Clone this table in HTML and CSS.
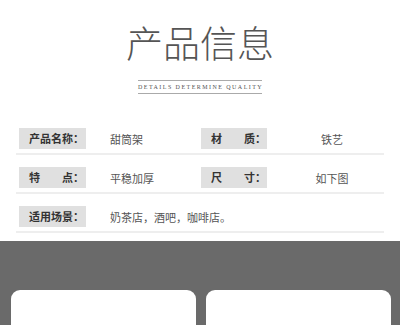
FILE: index.html
```html
<!DOCTYPE html>
<html lang="zh-CN">
<head>
<meta charset="utf-8">
<title>产品信息</title>
<link rel="stylesheet" href="styles.css">
</head>
<body>
<div class="page">
  <header class="head">
    <h1 class="title">产品信息</h1>
    <div class="sub">DETAILS DETERMINE QUALITY</div>
  </header>
  <section class="table">
    <div class="row">
      <div class="label">产品名称：</div>
      <div class="val">甜筒架</div>
      <div class="label label-r">材　　质：</div>
      <div class="val2">铁艺</div>
    </div>
    <div class="row">
      <div class="label">特　　点：</div>
      <div class="val">平稳加厚</div>
      <div class="label label-r">尺　　寸：</div>
      <div class="val2">如下图</div>
    </div>
    <div class="row">
      <div class="label">适用场景：</div>
      <div class="val val-wide">奶茶店，酒吧，咖啡店。</div>
    </div>
  </section>
  <section class="gallery">
    <div class="card"></div>
    <div class="card"></div>
  </section>
</div>
</body>
</html>
```
FILE: styles.css
```css
html, body {
  margin: 0;
  padding: 0;
  background: #fff;
}
body {
  font-family: "Noto Sans CJK SC", "Noto Sans", sans-serif;
  width: 400px;
  height: 325px;
  overflow: hidden;
}
.head {
  padding-top: 24px;
  display: flex;
  flex-direction: column;
  align-items: center;
}
.title {
  margin: 0;
  font-size: 37px;
  line-height: 37px;
  font-weight: 300;
  color: #555;
  letter-spacing: 0;
}
.sub {
  margin-top: 19px;
  width: 124px;
  height: 12px;
  border-top: 1px solid #aaa;
  border-bottom: 1px solid #aaa;
  font-family: "Liberation Serif", serif;
  font-size: 6px;
  line-height: 12px;
  letter-spacing: 1.45px;
  color: #555;
  text-align: center;
  white-space: nowrap;
}
.table {
  margin: 22px 16px 0;
}
.row {
  display: flex;
  align-items: center;
  padding: 12px 0 4px;
  border-bottom: 2px solid #eeeeee;
}
.label {
  width: 67px;
  height: 21px;
  margin-left: 3px;
  padding-left: 10px;
  box-sizing: border-box;
  background: #e0e0e0;
  color: #333;
  font-size: 11px;
  font-weight: 700;
  line-height: 21px;
  white-space: nowrap;
}
.label-r {
  width: 66px;
  margin-left: 0;
}
.val {
  width: 115px;
  padding-left: 24px;
  box-sizing: border-box;
  font-size: 11px;
  color: #555;
  white-space: nowrap;
}
.val-wide {
  width: auto;
}
.val2 {
  flex: 1;
  padding-left: 13px;
  text-align: center;
  font-size: 11px;
  color: #555;
}
.gallery {
  margin-top: 8px;
  background: #6a6a6a;
  padding: 49px 9px 0 11px;
  display: flex;
  gap: 10px;
  height: 35px;
}
.card {
  flex: 0 0 185px;
  height: 35px;
  background: #fff;
  border-radius: 9px 9px 0 0;
}
```
